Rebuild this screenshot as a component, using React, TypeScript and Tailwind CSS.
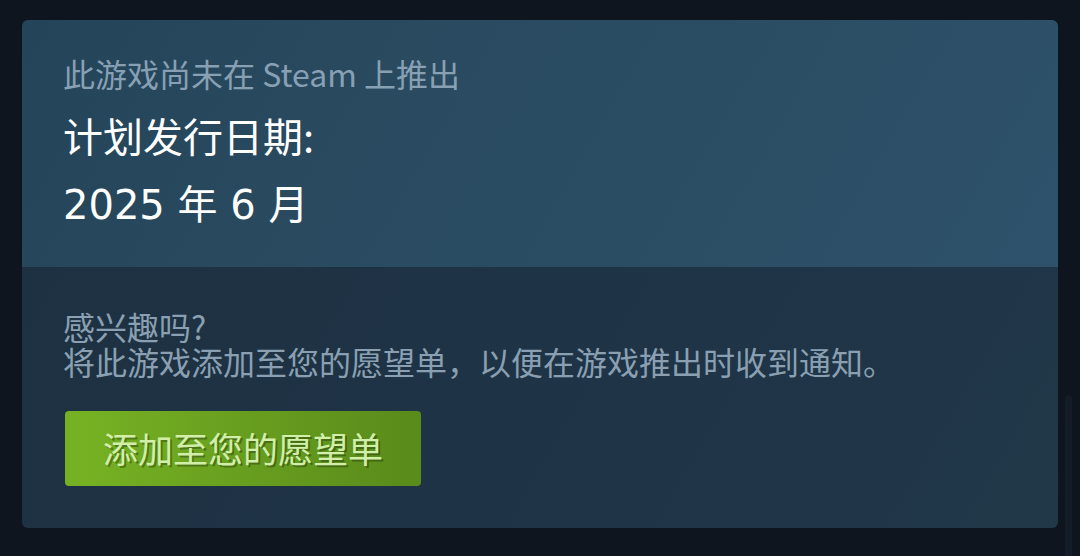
export default function App() {
  const cjk = { fontFamily: '"Noto Sans CJK SC", "Noto Sans", sans-serif' };

  return (
    <div
      className="relative h-[556px] w-[1080px] overflow-hidden bg-[#0e151e] pt-[20px] pl-[22px]"
      style={cjk}
    >
      <div className="w-[1036px] overflow-hidden rounded-[6px]">
        {/* coming soon */}
        <div className="bg-[linear-gradient(120deg,#24445a_0%,#2a4a60_35%,#2a4d63_60%,#2e526b_100%)] pt-[33px] pb-[38px] pl-[41px]">
          <div className="text-[32px] leading-[40px] text-[#87a0b4]">
            此游戏尚未在 Steam 上推出
          </div>
          <div className="mt-[18px] text-[40px] leading-[48px] text-white">
            计划发行日期:
          </div>
          <div className="mt-[22px] font-['DejaVu_Sans','Noto_Sans_CJK_SC',sans-serif] text-[40px] leading-[48px] text-white">
            2025 年 6 月
          </div>
        </div>

        {/* wishlist */}
        <div className="bg-[linear-gradient(120deg,#1d3142_0%,#1f3447_60%,#213849_100%)] pt-[42px] pb-[42px] pl-[41px]">
          <div className="text-[32px] leading-[35px] text-[#8aa0b2]">
            <p>感兴趣吗?</p>
            <p>将此游戏添加至您的愿望单，以便在游戏推出时收到通知。</p>
          </div>
          <button className="mt-[32px] ml-[2px] flex h-[75px] w-[356px] items-center justify-center rounded-[4px] bg-[linear-gradient(to_right,#76b123_5%,#5a8c1b_95%)] text-[35px] text-[#d2efa9] [text-shadow:2px_2px_0_rgba(0,0,0,0.3)]">
            添加至您的愿望单
          </button>
        </div>
      </div>

      {/* scrollbar */}
      <div className="absolute top-[395px] left-[1065px] h-[170px] w-[7px] rounded-t-full bg-[#141c28]" />
    </div>
  );
}
